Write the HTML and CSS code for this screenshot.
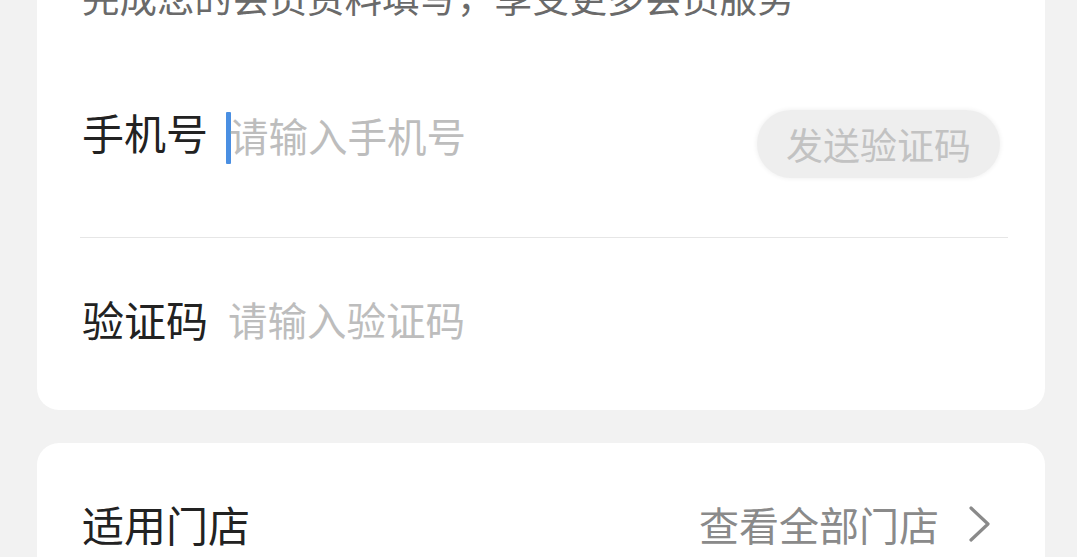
FILE: index.html
```html
<!DOCTYPE html>
<html lang="zh-CN">
<head>
<meta charset="utf-8">
<link rel="stylesheet" href="styles.css">
</head>
<body>
<div class="page">
  <section class="card card-form">
    <p class="desc">完成您的会员资料填写，享受更多会员服务</p>
    <div class="row row-phone">
      <span class="label">手机号</span>
      <div class="field">
        <span class="cursor"></span>
        <span class="placeholder">请输入手机号</span>
      </div>
      <button class="send-btn" type="button">发送验证码</button>
    </div>
    <div class="divider"></div>
    <div class="row row-code">
      <span class="label">验证码</span>
      <div class="field">
        <span class="placeholder">请输入验证码</span>
      </div>
    </div>
  </section>
  <section class="card card-store">
    <div class="row row-store">
      <span class="label store-label">适用门店</span>
      <a class="store-link">
        <span>查看全部门店</span>
        <svg class="chevron" width="26" height="38" viewBox="0 0 26 38"><polyline points="4,3 21,19 4,35" fill="none" stroke="#8a8a8a" stroke-width="3.2" stroke-linecap="round" stroke-linejoin="round"/></svg>
      </a>
    </div>
  </section>
</div>
</body>
</html>
```
FILE: styles.css
```css
html, body {
  margin: 0;
  padding: 0;
  background: #f2f2f2;
  font-family: "Noto Sans CJK SC", "Noto Sans", sans-serif;
  overflow: hidden;
}
.page {
  padding: 0 32px 0 37px;
  display: flex;
  flex-direction: column;
  gap: 33px;
}
.card {
  background: #ffffff;
  border-radius: 22px;
}
.card-form {
  margin-top: -34px;
  padding: 0 37px 0 45px;
  border-top-left-radius: 0;
  border-top-right-radius: 0;
}
.desc {
  margin: 0;
  height: 60px;
  line-height: 60px;
  font-size: 37.5px;
  color: #6a6a6a;
  white-space: nowrap;
}
.row {
  display: flex;
  align-items: center;
  box-sizing: border-box;
}
.row-phone {
  height: 211px;
}
.row-code {
  height: 172px;
  padding-bottom: 10px;
}
.label {
  width: 146px;
  flex: none;
  font-size: 42px;
  color: #222222;
  line-height: 1;
}
.field {
  flex: 1;
  display: flex;
  align-items: center;
}
.cursor {
  width: 5px;
  height: 52px;
  background: #4a8fe2;
  margin: 6px -2px -6px -2px;
  border-radius: 1px;
}
.placeholder {
  font-size: 39.5px;
  color: #bdbdbd;
  line-height: 1;
  white-space: nowrap;
}
.row-phone .placeholder {
  margin-top: 6px;
}
.send-btn {
  width: 243px;
  height: 68px;
  border: none;
  border-radius: 34px;
  background: #eeeeee;
  color: #c2c2c2;
  font-family: inherit;
  font-size: 37px;
  padding: 0;
  margin-right: 8px;
  margin-top: 25px;
  box-shadow: 0 0 4px 1px #f2f2f2;
}
.divider {
  height: 1px;
  background: #e6e6e6;
  margin-left: -2px;
}
.card-store {
  padding: 0 52px 0 45px;
  height: 200px;
}
.row-store {
  height: 162px;
  justify-content: space-between;
}
.store-label {
  width: auto;
}
.store-link {
  display: flex;
  align-items: center;
  gap: 28px;
  font-size: 40px;
  color: #8a8a8a;
  line-height: 1;
}
.chevron {
  display: block;
}
```
